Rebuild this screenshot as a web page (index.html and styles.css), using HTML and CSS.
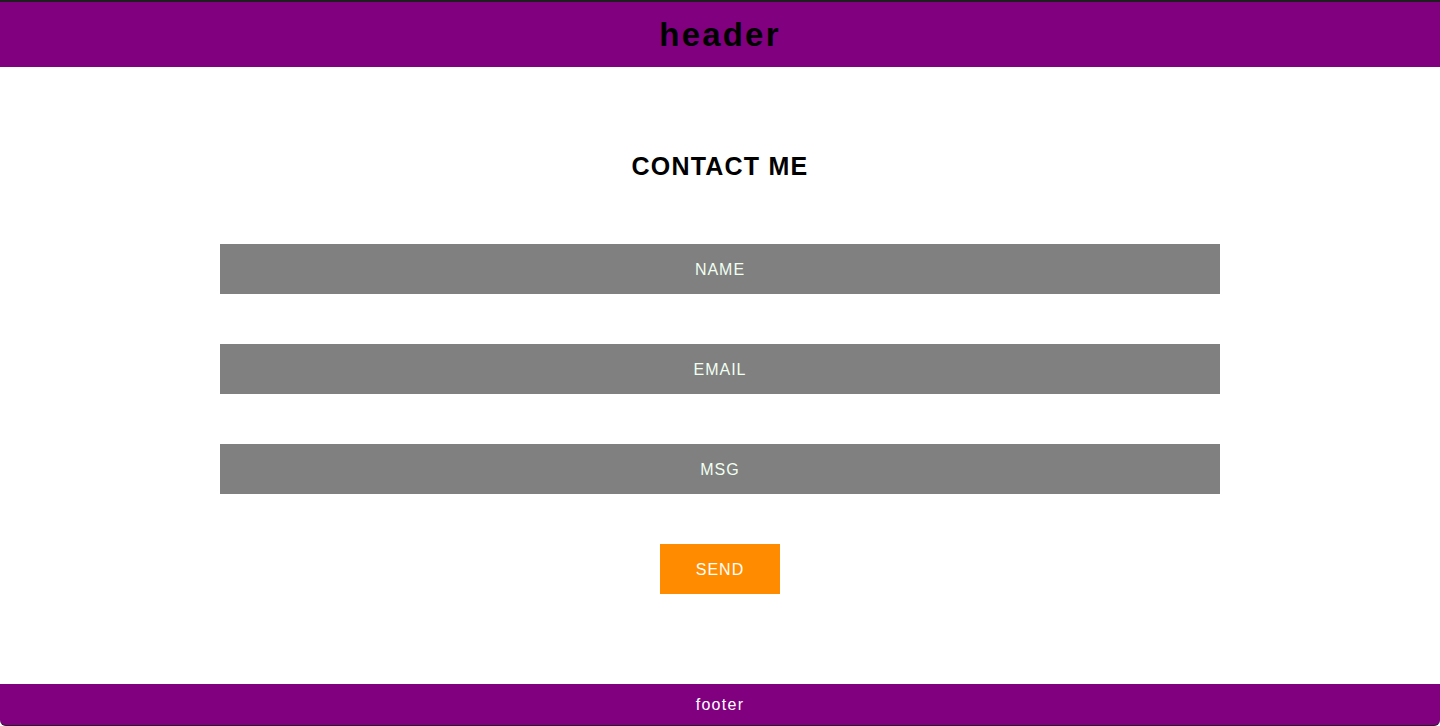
FILE: index.html
```html
<!DOCTYPE html>
<html>
<head>
<meta charset="utf-8">
<link rel="stylesheet" href="styles.css">
</head>
<body>
<div class="page">
  <header class="site-header">header</header>
  <main class="main">
    <h2 class="title">CONTACT ME</h2>
    <form class="form">
      <div class="field">NAME</div>
      <div class="field">EMAIL</div>
      <div class="field">MSG</div>
      <button type="button" class="send">SEND</button>
    </form>
  </main>
  <footer class="site-footer">footer</footer>
</div>
</body>
</html>
```
FILE: styles.css
```css
html, body {
  margin: 0;
  padding: 0;
  background: #ffffff;
}
body {
  font-family: "Liberation Sans", Arial, sans-serif;
}
.page {
  height: 726px;
  display: flex;
  flex-direction: column;
}
.site-header {
  height: 65px;
  border-top: 2px solid #1e1e1e;
  background: #800080;
  color: #000;
  font-size: 33px;
  font-weight: bold;
  letter-spacing: 2.2px;
  display: flex;
  align-items: center;
  justify-content: center;
  box-sizing: content-box;
}
.main {
  flex: 1;
  display: flex;
  flex-direction: column;
  align-items: center;
  padding-top: 85px;
}
.title {
  margin: 0;
  font-size: 25px;
  line-height: 28px;
  font-weight: bold;
  letter-spacing: 1.2px;
  color: #000;
}
.form {
  margin-top: 64px;
  display: flex;
  flex-direction: column;
  align-items: center;
  gap: 50px;
}
.field {
  width: 1000px;
  height: 50px;
  padding-top: 2px;
  box-sizing: border-box;
  background: #808080;
  color: #f0fff0;
  font-size: 16px;
  letter-spacing: 1px;
  display: flex;
  align-items: center;
  justify-content: center;
}
.send {
  width: 120px;
  height: 50px;
  border: none;
  background: #ff8c00;
  color: #ffffff;
  font-family: "Liberation Sans", Arial, sans-serif;
  font-size: 16px;
  letter-spacing: 1px;
  padding: 2px 0 0;
}
.site-footer {
  height: 41px;
  border-bottom: 1px solid #2a1a2a;
  background: #800080;
  color: #ffffff;
  font-size: 16px;
  letter-spacing: 1.3px;
  display: flex;
  align-items: center;
  justify-content: center;
  border-radius: 0 0 6px 6px;
}
```
